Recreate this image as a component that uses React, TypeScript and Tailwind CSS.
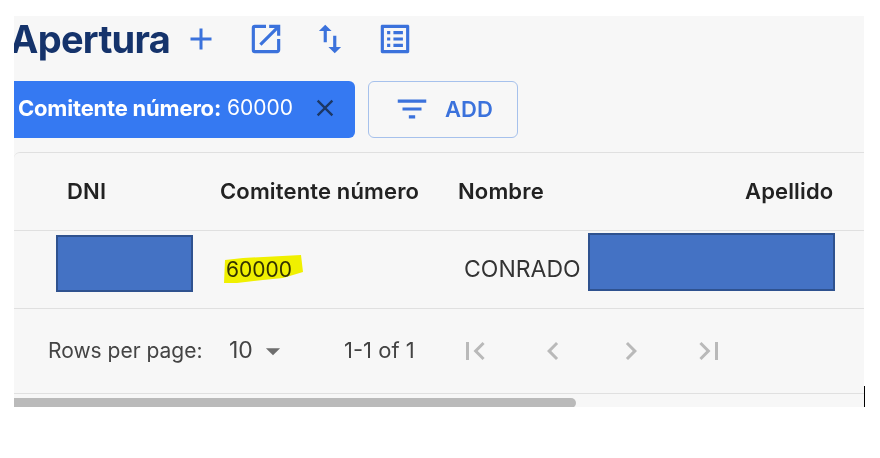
import {
  MdAdd,
  MdArrowDropDown,
  MdChevronLeft,
  MdChevronRight,
  MdClose,
  MdFilterList,
  MdFirstPage,
  MdLastPage,
  MdOpenInNew,
  MdOutlineListAlt,
  MdSwapVert,
} from "react-icons/md";

export default function App() {
  return (
    <div className="relative h-[458px] w-[880px] overflow-hidden bg-white pl-[14px] pt-[16px] font-['Inter',sans-serif]">
      <div className="relative h-[391px] w-[850px] overflow-hidden bg-[#f7f7f7]">
        {/* Cabecera */}
        <div className="flex h-[46px] items-center">
          <h1 className="ml-[-4px] w-[172px] text-[38px] font-bold leading-none tracking-[-0.7px] text-[#15336b]">Apertura</h1>
          <MdAdd className="ml-[1px] text-[#3b72dc]" size={36} />
          <MdOpenInNew className="ml-[28px] text-[#3b72dc]" size={38} />
          <MdSwapVert className="ml-[26px] text-[#3b72dc]" size={38} />
          <MdOutlineListAlt className="ml-[27px] text-[#3b72dc]" size={38} />
        </div>

        {/* Filtros */}
        <div className="mt-[19px] flex h-[57px] items-stretch gap-[13px]">
          <div className="flex w-[341px] items-center rounded-r-[6px] bg-[#3579f2] pb-[3px] pl-[4px] text-white">
            <span className="text-[22px] font-bold tracking-[-0.2px]">Comitente número:</span>
            <span className="ml-[6px] text-[21px]">60000</span>
            <MdClose className="ml-[18px] text-[#1c3764]" size={28} />
          </div>
          <button className="flex w-[150px] items-center rounded-[6px] border border-[#a6c1ec] pb-[1px] pl-[24px] text-[22px] font-semibold text-[#3b72dc]">
            <MdFilterList size={38} />
            <span className="ml-[14px]">ADD</span>
          </button>
        </div>

        {/* Tabla */}
        <div className="mt-[14px] rounded-tl-[6px] border-t border-[#e0e0e0] text-[22px] text-[#222222]">
          <div className="grid h-[78px] grid-cols-[206px_238px_287px_1fr] items-center border-b border-[#e0e0e0] pb-[1px] font-semibold tracking-[0.15px]">
            <span className="pl-[53px]">DNI</span>
            <span>Comitente número</span>
            <span>Nombre</span>
            <span>Apellido</span>
          </div>
          <div className="relative grid h-[78px] grid-cols-[206px_238px_287px_1fr] items-center border-b border-[#e0e0e0] text-[#333333]">
            <span />
            <span className="pl-[6px] text-[21px]">60000</span>
            <span className="pl-[6px] text-[23px]">CONRADO</span>
            <span />
          </div>

          {/* Paginacion */}
          <div className="flex h-[85px] items-center border-b border-[#e0e0e0] pb-[1px] text-[#444444]">
            <span className="ml-[34px] w-[181px] text-[21px]">Rows per page:</span>
            <span className="w-[27px] text-[23px]">10</span>
            <MdArrowDropDown className="text-[#6e6e6e]" size={34} />
            <span className="ml-[54px] w-[113px]">1-1 of 1</span>
            <div className="flex gap-[42px] text-[#b9b9b9]">
              <MdFirstPage size={36} />
              <MdChevronLeft size={36} />
              <MdChevronRight size={36} />
              <MdLastPage size={36} />
            </div>
          </div>
        </div>

        {/* Barra de desplazamiento */}
        <div className="mt-[4px] h-[10px] w-[562px] rounded-r-[5px] bg-[#bababa]" />

        {/* Tapas azules y resaltado encima de la tabla */}
        <div className="absolute left-[42px] top-[219px] h-[57px] w-[137px] border-2 border-[#2f528f] bg-[#4472c4]" />
        <div className="absolute left-[574px] top-[217px] h-[58px] w-[247px] border-2 border-[#2f528f] bg-[#4472c4]" />
        <svg className="absolute left-[209px] top-[238px] mix-blend-multiply" width="80" height="32" viewBox="0 0 80 32">
          <path d="M2 6 L20 4 L78 1 L80 18 L60 24 L40 26 L14 29 L1 29 Z" fill="#f8f800" />
        </svg>
      </div>
      <div className="absolute left-[864px] top-[386px] h-[21px] w-px bg-black" />
    </div>
  );
}
